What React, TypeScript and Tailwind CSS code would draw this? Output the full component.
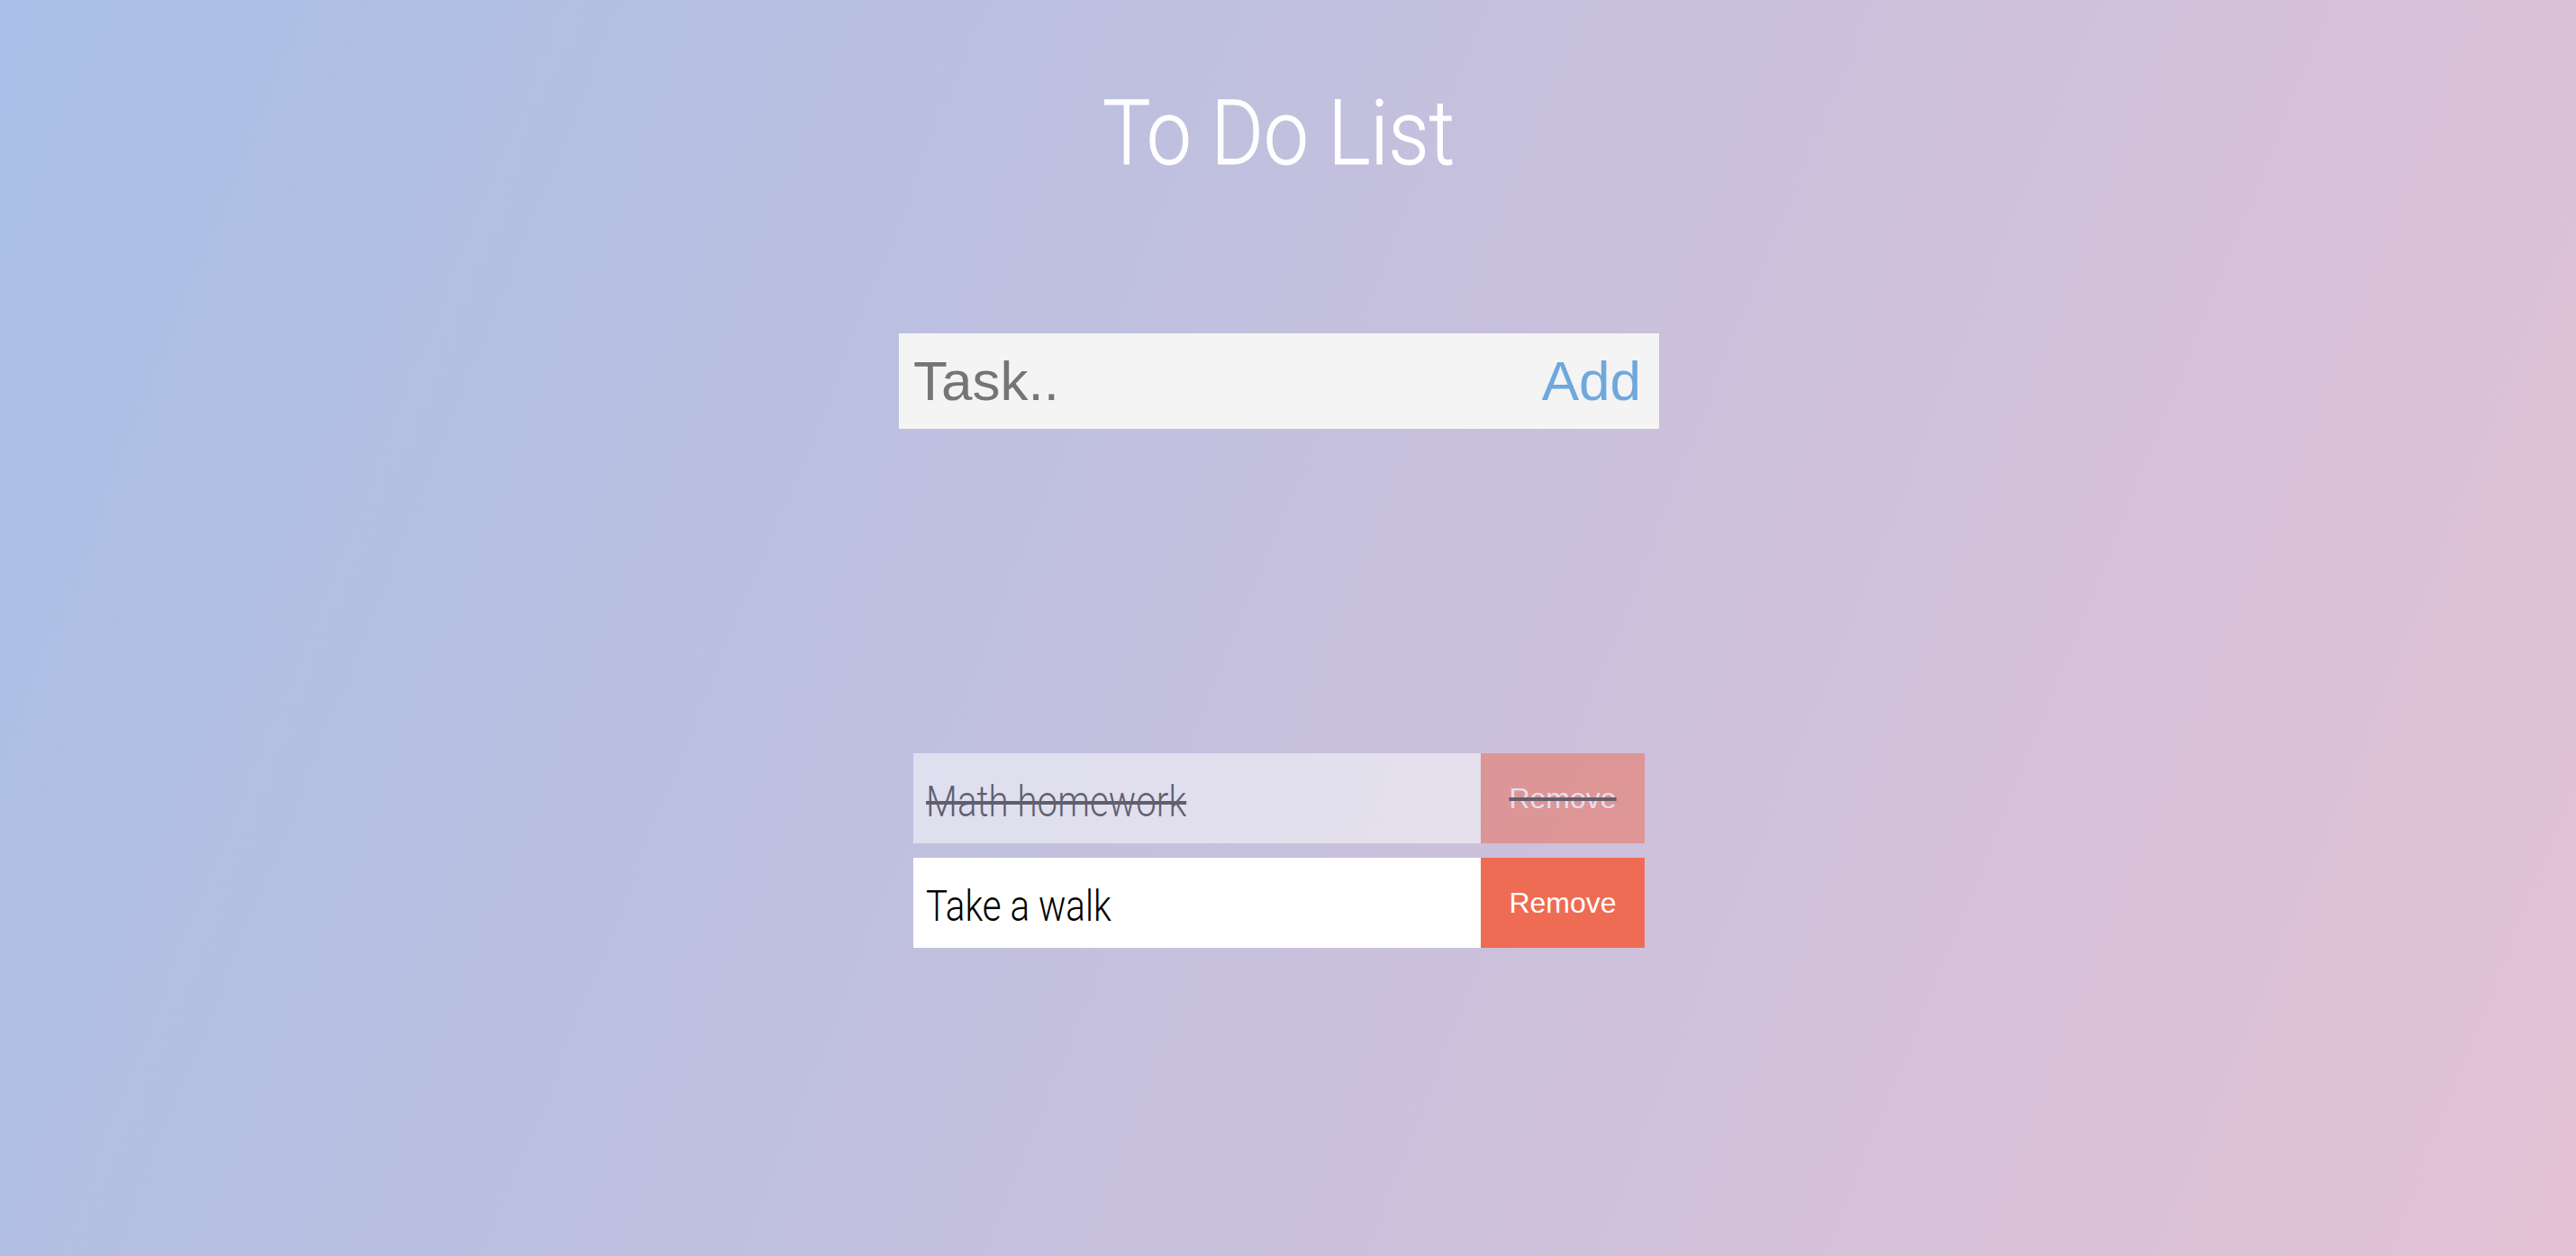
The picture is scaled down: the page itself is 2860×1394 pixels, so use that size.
import React from "react";

type Task = { id: number; text: string; done: boolean };

const TASKS: Task[] = [
  { id: 1, text: "Math homework", done: true },
  { id: 2, text: "Take a walk", done: false },
];

function TaskRow({ task }: { task: Task }) {
  return (
    <li
      className={`flex h-[100px] w-full items-stretch bg-white ${
        task.done ? "opacity-50 line-through decoration-black decoration-[4px]" : ""
      }`}
    >
      <div className="flex flex-1 items-center pl-[14px] pt-[8px]">
        <span className="origin-left scale-x-[0.84] font-['Roboto',sans-serif] text-[48px] font-light leading-none text-black">
          {task.text}
        </span>
      </div>
      <button className="w-[182px] bg-[#ef6c54] font-['Liberation_Sans',Arial,sans-serif] text-[32px] leading-none text-white">
        Remove
      </button>
    </li>
  );
}

export default function App() {
  return (
    <div className="min-h-screen w-full bg-[linear-gradient(112deg,#a9bfe7_0%,#c2c0de_45%,#e4c2d5_100%)]">
      <div className="flex flex-col items-center pr-[20px] pt-[98px]">
        <h1 className="scale-x-[0.89] font-['Roboto',sans-serif] text-[100px] font-light leading-none text-white [-webkit-text-stroke:1px_white]">
          To Do List
        </h1>

        <div className="mt-[172px] flex h-[106px] w-[844px] items-center justify-between bg-[#f4f4f4] pl-[16px] pr-[20px]">
          <span className="font-['Liberation_Sans',Arial,sans-serif] text-[62px] leading-none text-[#757575]">
            Task..
          </span>
          <span className="font-['Liberation_Sans',Arial,sans-serif] text-[62px] leading-none text-[#6fa8dc]">
            Add
          </span>
        </div>

        <ul className="mt-[360px] flex w-[812px] flex-col gap-[16px]">
          {TASKS.map((t) => (
            <TaskRow key={t.id} task={t} />
          ))}
        </ul>
      </div>
    </div>
  );
}
